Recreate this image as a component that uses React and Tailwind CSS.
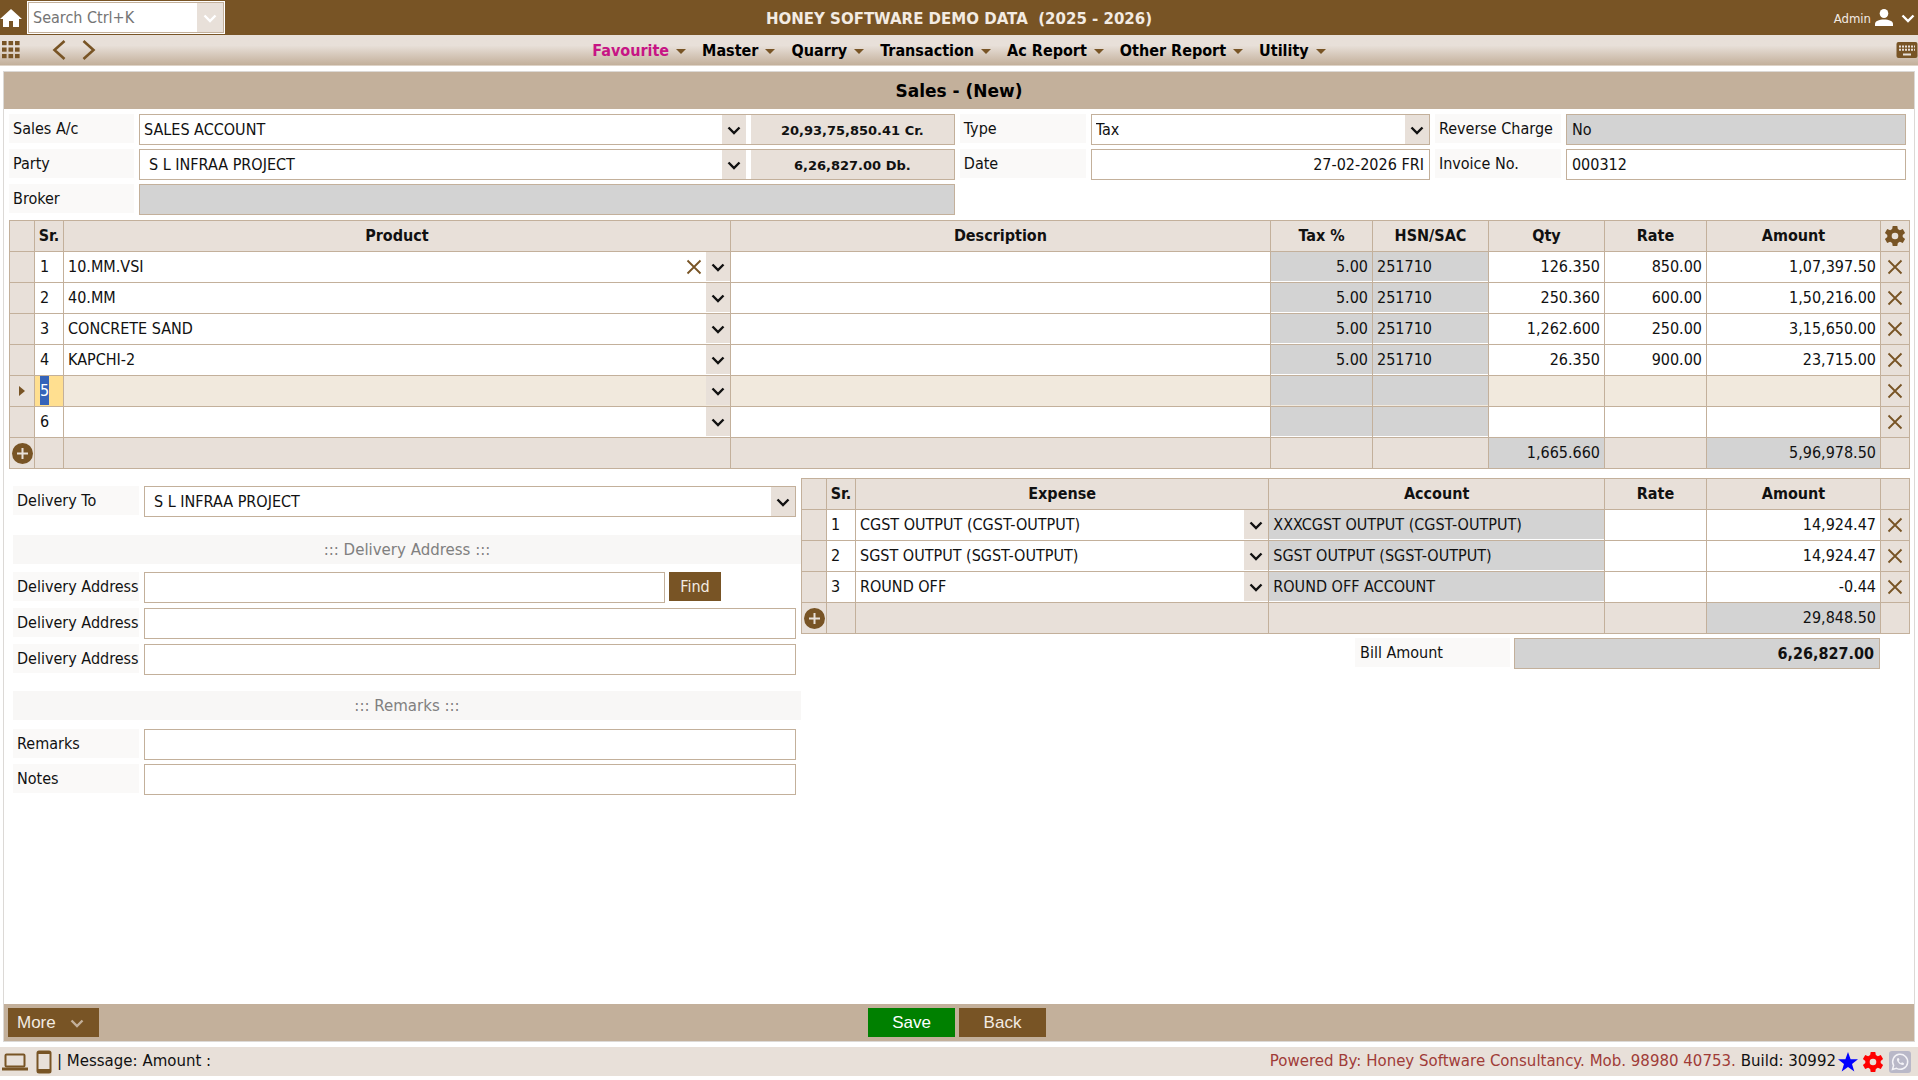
import { useEffect, useRef } from "react";

const menus = ["Favourite", "Master", "Quarry", "Transaction", "Ac Report", "Other Report", "Utility"];

const products = [
  { name: "10.MM.VSI", tax: "5.00", hsn: "251710", qty: "126.350", rate: "850.00", amount: "1,07,397.50" },
  { name: "40.MM", tax: "5.00", hsn: "251710", qty: "250.360", rate: "600.00", amount: "1,50,216.00" },
  { name: "CONCRETE SAND", tax: "5.00", hsn: "251710", qty: "1,262.600", rate: "250.00", amount: "3,15,650.00" },
  { name: "KAPCHI-2", tax: "5.00", hsn: "251710", qty: "26.350", rate: "900.00", amount: "23,715.00" },
  { name: "", tax: "", hsn: "", qty: "", rate: "", amount: "" },
  { name: "", tax: "", hsn: "", qty: "", rate: "", amount: "" },
];

const expenses = [
  { name: "CGST OUTPUT (CGST-OUTPUT)", account: "XXXCGST OUTPUT (CGST-OUTPUT)", amount: "14,924.47" },
  { name: "SGST OUTPUT (SGST-OUTPUT)", account: "SGST OUTPUT (SGST-OUTPUT)", amount: "14,924.47" },
  { name: "ROUND OFF", account: "ROUND OFF ACCOUNT", amount: "-0.44" },
];

const box = "h-[31px] w-full min-w-0 border border-[#c3b09b] px-[5px]";
const headCell = "border border-[#c3b09b] p-0 font-bold";
const cell = "border border-[#c3b09b] p-0";

function Chevron({ className = "h-3 w-3.5" }) {
  return (
    <svg viewBox="0 0 14 12" className={className} fill="none" stroke="currentColor" strokeWidth="2.4">
      <path d="M1.500 3.500 7 9l5.500-5.500" />
    </svg>
  );
}

function Cross() {
  return (
    <svg viewBox="0 0 16 16" className="h-4 w-4" fill="none" stroke="#785425" strokeWidth="1.8">
      <path d="m1.500 1.500 13 13M14.500 1.500l-13 13" />
    </svg>
  );
}

function Gear({ className, hole }) {
  return (
    <svg viewBox="0 0 24 24" className={className} fill="currentColor">
      <path d="M9.500 1h5l.6 3.300 2.200 1.300 3.200-1.200 2.500 4.300-2.600 2.200v2.200l2.600 2.200-2.500 4.300-3.200-1.200-2.200 1.300-.6 3.300h-5l-.6-3.300-2.200-1.300-3.200 1.200L1 15.300l2.600-2.200v-2.200L1 8.700l2.500-4.300 3.200 1.200 2.200-1.300z" />
      <circle cx="12" cy="12" r="3.600" fill={hole} />
    </svg>
  );
}

function PlusButton({ label }) {
  return (
    <button type="button" aria-label={label} className="mx-auto block h-[21px] w-[21px]">
      <svg viewBox="0 0 21 21" className="h-full w-full">
        <circle cx="10.500" cy="10.500" r="10.500" fill="#785425" />
        <path d="M10.500 5v11M5 10.500h11" stroke="#e8e0d9" strokeWidth="2" />
      </svg>
    </button>
  );
}

function Label({ htmlFor, children, className = "px-1" }) {
  return (
    <label htmlFor={htmlFor} className={`flex h-[29px] items-center overflow-hidden bg-[#faf9f8] whitespace-nowrap ${className}`}>
      {children}
    </label>
  );
}

function Combo({ id, label, value, className = "", selectClass = "px-1", children }) {
  return (
    <div className={`relative flex min-w-0 ${className}`}>
      <select id={id} aria-label={label} className={`w-full min-w-0 appearance-none bg-transparent ${selectClass}`}>
        <option>{value}</option>
      </select>
      {children}
      <span className="pointer-events-none absolute inset-y-0 right-0 flex w-6 items-center justify-center bg-[#e8e0d9]">
        <Chevron />
      </span>
    </div>
  );
}

function CellInput({ label, value, gray, right }) {
  return (
    <input
      aria-label={label}
      defaultValue={value}
      readOnly={gray}
      className={`block h-[29px] w-full px-1 ${gray ? "bg-[#d3d3d3]" : "bg-transparent"} ${right ? "text-right" : ""}`}
    />
  );
}

function RemoveCell({ label }) {
  return (
    <td className={`${cell} bg-[#e8e0d9] align-middle`}>
      <button type="button" aria-label={label} className="mx-auto block h-4 w-4"><Cross /></button>
    </td>
  );
}

function TopBar() {
  return (
    <header className="grid h-[35px] shrink-0 grid-cols-[1fr_auto_1fr] items-center bg-[#785425] text-white">
      <div className="flex items-center gap-[5px]">
        <button type="button" aria-label="Home">
          <svg viewBox="0 0 22 18" className="h-[18px] w-[22px]" fill="currentColor">
            <path d="M11 0 0 10h3v8h6v-6h4v6h6v-8h3z" />
          </svg>
        </button>
        <div className="bg-white p-px">
          <div className="flex h-[31px] w-[196px] border border-[#c3b09b] bg-white">
            <input type="search" aria-label="Search" placeholder="Search Ctrl+K" className="min-w-0 flex-1 px-1 placeholder:text-[#757575]" />
            <button type="button" aria-label="Open search list" className="flex w-[26px] items-center justify-center bg-[#e8e0d9] text-white"><Chevron /></button>
          </div>
        </div>
      </div>
      <h1 className="pt-0.5 font-['DejaVu_Sans','Noto_Sans',sans-serif] text-[15px] font-bold whitespace-pre text-[#f3ebe2]">HONEY SOFTWARE DEMO DATA  (2025 - 2026)</h1>
      <div className="flex items-center justify-end gap-1 pr-[3px]">
        <span className="pt-0.5 text-[13px] text-[#f3ebe2]">Admin</span>
        <svg viewBox="0 0 18 17" className="h-[17px] w-[18px]" fill="currentColor">
          <ellipse cx="9" cy="4.500" rx="4.300" ry="4.500" />
          <path d="M0 17v-2c0-3 4-4.500 9-4.500s9 1.500 9 4.500v2z" />
        </svg>
        <button type="button" aria-label="User menu" className="ml-1"><Chevron className="h-3 w-3.5" /></button>
      </div>
    </header>
  );
}

function MenuBar() {
  return (
    <nav className="grid h-[31px] shrink-0 grid-cols-[1fr_auto_1fr] items-center border-b border-[#ded3c7] bg-linear-to-b from-[#e8e0d9] from-35% to-[#c3b09b]">
      <div className="flex items-center pl-[2px] text-[#785425]">
        <button type="button" aria-label="Applications">
          <svg viewBox="0 0 18 18" className="h-[18px] w-[18px]" fill="currentColor">
            {[0, 6.500, 13].map((y) => [0, 6.500, 13].map((x) => <rect key={`${x}-${y}`} x={x} y={y} width="4.600" height="4.200" />))}
          </svg>
        </button>
        <button type="button" aria-label="Previous" className="ml-8">
          <svg viewBox="0 0 14 20" className="h-5 w-3.5" fill="none" stroke="currentColor" strokeWidth="2.6"><path d="m12.500 1-10 9 10 9" /></svg>
        </button>
        <button type="button" aria-label="Next" className="ml-4">
          <svg viewBox="0 0 14 20" className="h-5 w-3.5" fill="none" stroke="currentColor" strokeWidth="2.6"><path d="m1.500 1 10 9-10 9" /></svg>
        </button>
      </div>
      <div className="flex items-center gap-4 pt-0.5 font-bold">
        {menus.map((m) => (
          <button type="button" key={m} className={`flex items-center gap-[7px] ${m === "Favourite" ? "text-[#c71585]" : "text-black"}`}>
            {m}
            <svg viewBox="0 0 10 5" className="h-[5px] w-[10px]" fill="#785425"><path d="M0 0h10L5 5z" /></svg>
          </button>
        ))}
      </div>
      <button type="button" aria-label="Keyboard" className="justify-self-end">
        <svg viewBox="0 0 22 16" className="h-4 w-[22px]">
          <rect x="0.500" y="0" width="21" height="16" rx="2" fill="#785425" />
          <path d="M3 4.500h16M3 7.800h16" stroke="#e8e0d9" strokeWidth="2" strokeDasharray="2 1" />
          <path d="M7 12.500h8" stroke="#e8e0d9" strokeWidth="2" />
        </svg>
      </button>
    </nav>
  );
}

function Balance({ children }) {
  return (
    <output className="ml-[5px] flex w-[203px] items-center justify-center bg-[#e8e0d9] pt-0.5 font-['DejaVu_Sans','Noto_Sans',sans-serif] text-[13px] font-bold">
      {children}
    </output>
  );
}

function SalesHeader() {
  return (
    <div className="grid grid-cols-[125px_818fr_126px_340fr_126px_341fr] gap-x-[5px] gap-y-1 pt-[5px] pr-2 pl-[5px]">
      <Label htmlFor="sales">Sales A/c</Label>
      <div className="flex h-[31px] border border-[#c3b09b]">
        <Combo id="sales" value="SALES ACCOUNT" className="flex-1" />
        <Balance>20,93,75,850.41 Cr.</Balance>
      </div>
      <Label htmlFor="type">Type</Label>
      <Combo id="type" value="Tax" className="h-[31px] border border-[#c3b09b]" />
      <Label htmlFor="reverse">Reverse Charge</Label>
      <input id="reverse" readOnly defaultValue="No" className={`${box} bg-[#d3d3d3]`} />

      <Label htmlFor="party">Party</Label>
      <div className="flex h-[31px] border border-[#c3b09b]">
        <Combo id="party" value="S L INFRAA PROJECT" className="flex-1" selectClass="pl-[9px]" />
        <Balance>6,26,827.00 Db.</Balance>
      </div>
      <Label htmlFor="date">Date</Label>
      <input id="date" defaultValue="27-02-2026 FRI" className={`${box} text-right`} />
      <Label htmlFor="invoice">Invoice No.</Label>
      <input id="invoice" defaultValue="000312" className={box} />

      <Label htmlFor="broker">Broker</Label>
      <input id="broker" readOnly className={`${box} bg-[#d3d3d3]`} />
    </div>
  );
}

function ProductTable() {
  const active = useRef(null);
  useEffect(() => {
    active.current.focus();
    active.current.select();
  }, []);
  return (
    <div className="pt-[5px] pr-1 pl-[5px]">
      <table className="w-full table-fixed border-collapse">
        <colgroup>
          <col className="w-[25px]" /><col className="w-[29px]" /><col className="w-[35.1%]" /><col />
          <col className="w-[102px]" /><col className="w-[116px]" /><col className="w-[116px]" />
          <col className="w-[102px]" /><col className="w-[174px]" /><col className="w-[29px]" />
        </colgroup>
        <thead>
          <tr className="h-[31px] bg-[#e8e0d9]">
            <th className={headCell} />
            {["Sr.", "Product", "Description", "Tax %", "HSN/SAC", "Qty", "Rate", "Amount"].map((h) => (
              <th key={h} scope="col" className={headCell}>{h}</th>
            ))}
            <th className={headCell}>
              <button type="button" aria-label="Column settings" className="mx-auto block h-[22px] w-[22px] text-[#785425]">
                <Gear className="h-full w-full" hole="#e8e0d9" />
              </button>
            </th>
          </tr>
        </thead>
        <tbody>
          {products.map((p, i) => {
            const on = i === 4;
            return (
              <tr key={i} className={`h-[31px] align-top ${on ? "bg-[#f1e9dd]" : "bg-white"}`}>
                <td className={`${cell} bg-[#e8e0d9] align-middle`}>
                  {on && <svg viewBox="0 0 6 10" className="mx-auto h-2.5 w-1.5" fill="#785425"><path d="M0 0v10l6-5z" /></svg>}
                </td>
                <td className={`${cell} ${on ? "bg-[#ffdf90]" : ""}`}>
                  <input
                    ref={on ? active : null}
                    aria-label="Serial number"
                    defaultValue={i + 1}
                    className="block h-[29px] w-full px-[5px] leading-[29px] outline-none selection:bg-[#3563b9] selection:text-white"
                  />
                </td>
                <td className={cell}>
                  <Combo label="Product" value={p.name} className="h-[29px]">
                    {i === 0 && (
                      <button type="button" aria-label="Clear product" className="absolute inset-y-0 right-7 flex items-center"><Cross /></button>
                    )}
                  </Combo>
                </td>
                <td className={cell}><CellInput label="Description" value="" /></td>
                <td className={cell}><CellInput label="Tax" value={p.tax} gray right /></td>
                <td className={cell}><CellInput label="HSN/SAC" value={p.hsn} gray /></td>
                <td className={cell}><CellInput label="Quantity" value={p.qty} right /></td>
                <td className={cell}><CellInput label="Rate" value={p.rate} right /></td>
                <td className={cell}><CellInput label="Amount" value={p.amount} right /></td>
                <RemoveCell label="Remove row" />
              </tr>
            );
          })}
        </tbody>
        <tfoot>
          <tr className="h-[31px] bg-[#e8e0d9]">
            <td className={cell}><PlusButton label="Add product row" /></td>
            <td className={cell} /><td className={cell} /><td className={cell} /><td className={cell} /><td className={cell} />
            <td className={`${cell} bg-[#d3d3d3] pr-1 text-right`}>1,665.660</td>
            <td className={cell} />
            <td className={`${cell} bg-[#d3d3d3] pr-1 text-right`}>5,96,978.50</td>
            <td className={cell} />
          </tr>
        </tfoot>
      </table>
    </div>
  );
}

function SectionTitle({ children }) {
  return (
    <h2 className="flex h-[29px] items-center justify-center bg-[#f8f7f6] font-['DejaVu_Sans','Noto_Sans',sans-serif] text-[15px] text-[#808080]">
      {children}
    </h2>
  );
}

function TextRow({ id, label }) {
  return (
    <div className="flex gap-[5px] pr-[5px]">
      <Label htmlFor={id} className="w-[126px] shrink-0 pl-1">{label}</Label>
      <input id={id} className={box} />
    </div>
  );
}

function Delivery() {
  return (
    <section className="flex flex-col pt-[17px]">
      <div className="flex gap-[5px] pr-[5px]">
        <Label htmlFor="delivery" className="w-[126px] shrink-0 pl-1">Delivery To</Label>
        <Combo id="delivery" value="S L INFRAA PROJECT" className="h-[31px] flex-1 border border-[#c3b09b]" selectClass="pl-[9px]" />
      </div>
      <div className="mt-[18px]"><SectionTitle>::: Delivery Address :::</SectionTitle></div>
      <div className="mt-2 flex flex-col gap-[5px]">
        <div className="flex gap-1">
          <Label htmlFor="address1" className="mr-px w-[126px] shrink-0 pl-1">Delivery Address</Label>
          <input id="address1" className="h-[31px] min-w-0 flex-1 border border-[#c3b09b] px-[5px]" />
          <button type="button" className="mr-20 h-[29px] w-[52px] bg-[#785425] text-[#f3ebe2]">Find</button>
        </div>
        <TextRow id="address2" label="Delivery Address" />
        <TextRow id="address3" label="Delivery Address" />
      </div>
      <div className="mt-4"><SectionTitle>::: Remarks :::</SectionTitle></div>
      <div className="mt-[9px] flex flex-col gap-1">
        <TextRow id="remarks" label="Remarks" />
        <TextRow id="notes" label="Notes" />
      </div>
    </section>
  );
}

function Expenses() {
  return (
    <section className="pt-[9px]">
      <table className="w-full table-fixed border-collapse">
        <colgroup>
          <col className="w-[25px]" /><col className="w-[29px]" /><col /><col className="w-[30.3%]" />
          <col className="w-[102px]" /><col className="w-[174px]" /><col className="w-[29px]" />
        </colgroup>
        <thead>
          <tr className="h-[31px] bg-[#e8e0d9]">
            <th className={headCell} />
            {["Sr.", "Expense", "Account", "Rate", "Amount"].map((h) => (
              <th key={h} scope="col" className={headCell}>{h}</th>
            ))}
            <th className={headCell} />
          </tr>
        </thead>
        <tbody>
          {expenses.map((e, i) => (
            <tr key={e.name} className="h-[31px]">
              <td className={`${cell} bg-[#e8e0d9]`} />
              <td className={`${cell} pl-1`}>{i + 1}</td>
              <td className={`${cell} align-top`}><Combo label="Expense" value={e.name} className="h-[29px]" /></td>
              <td className={`${cell} align-top`}><CellInput label="Account" value={e.account} gray /></td>
              <td className={`${cell} align-top`}><CellInput label="Rate" value="" right /></td>
              <td className={`${cell} align-top`}><CellInput label="Amount" value={e.amount} right /></td>
              <RemoveCell label="Remove expense" />
            </tr>
          ))}
        </tbody>
        <tfoot>
          <tr className="h-[31px] bg-[#e8e0d9]">
            <td className={cell}><PlusButton label="Add expense row" /></td>
            <td className={cell} /><td className={cell} /><td className={cell} /><td className={cell} />
            <td className={`${cell} bg-[#d3d3d3] pr-1 text-right`}>29,848.50</td>
            <td className={cell} />
          </tr>
        </tfoot>
      </table>
      <div className="mt-1 mr-[30px] flex justify-end gap-1">
        <Label htmlFor="bill" className="w-[155px] px-[5px]">Bill Amount</Label>
        <input id="bill" readOnly defaultValue="6,26,827.00" className="h-[31px] w-[366px] border border-[#c3b09b] bg-[#d3d3d3] px-[5px] text-right font-bold" />
      </div>
    </section>
  );
}

function StatusBar() {
  return (
    <footer className="mb-1 flex h-[29px] shrink-0 items-center justify-between bg-[#e8e0d9] font-['DejaVu_Sans','Noto_Sans',sans-serif] text-[15px]">
      <div className="flex items-center">
        <svg viewBox="0 0 26 18" className="ml-[2px] h-[18px] w-[26px]" fill="none" stroke="#785425">
          <rect x="3.500" y="1.500" width="19" height="12" rx="1" strokeWidth="2" />
          <path d="M0 16h26" strokeWidth="3" />
        </svg>
        <svg viewBox="0 0 16 24" className="ml-2 h-6 w-4">
          <rect x="0.500" y="0.500" width="15" height="23" rx="2.500" fill="#785425" />
          <rect x="2.500" y="4" width="11" height="15" fill="#e8e0d9" />
        </svg>
        <span className="pb-0.5 pl-[5px] whitespace-pre">| Message: Amount :</span>
      </div>
      <div className="flex items-center pr-[7px]">
        <span className="pb-0.5 text-[#a03c38]">Powered By: Honey Software Consultancy. Mob. 98980 40753.</span>
        <span className="pb-0.5 pl-[5px]">Build: 30992</span>
        <svg viewBox="0 0 20 20" className="ml-[2px] h-5 w-5" fill="#00f">
          <path d="m10 0 2.600 7.200H20l-6 4.700 2.300 7.600L10 15l-6.300 4.500L6 11.900 0 7.200h7.400z" />
        </svg>
        <button type="button" aria-label="Settings" className="ml-1 h-[22px] w-[22px] text-[#f00]">
          <Gear className="h-full w-full" hole="#e8e0d9" />
        </button>
        <button type="button" aria-label="WhatsApp" className="ml-[5px] h-[22px] w-[22px]">
          <svg viewBox="0 0 22 22" className="h-full w-full" fill="none" stroke="#f4f3f7" strokeWidth="1.500">
            <rect width="22" height="22" rx="3" fill="#b9b8c8" stroke="none" />
            <path d="m3.500 18.500 1.100-4.100a7.500 7.500 0 1 1 2.900 2.900z" />
            <path d="M8 7.500c-.8 3 3.500 7.200 6.600 6.400l.4-1.700-2-.9-1 .9c-1.100-.5-1.900-1.300-2.300-2.300l.8-1-.8-1.900z" fill="#f4f3f7" stroke="none" />
          </svg>
        </button>
      </div>
    </footer>
  );
}

export default function App() {
  return (
    <div className="flex min-h-screen flex-col bg-white font-['DejaVu_Sans_Condensed','Noto_Sans',sans-serif] text-base leading-6 text-[#111]">
      <TopBar />
      <MenuBar />
      <main className="mx-[3px] mt-[5px] mb-[5px] flex flex-1 flex-col border border-[#dcd9d6]">
        <h2 className="flex h-[37px] items-center justify-center bg-[#c3b09b] font-['DejaVu_Sans','Noto_Sans',sans-serif] text-[17px] font-bold text-black">Sales - (New)</h2>
        <SalesHeader />
        <ProductTable />
        <div className="grid flex-1 grid-cols-[788fr_1109fr] pr-1 pl-[9px]">
          <Delivery />
          <Expenses />
        </div>
        <div className="grid h-[37px] grid-cols-[1fr_auto_1fr] items-center bg-[#c3b09b] pr-2 pl-1 font-['Liberation_Sans',sans-serif] text-[17px] text-[#f3ebe2]">
          <button type="button" className="flex h-[29px] w-[91px] items-center gap-3.5 bg-[#785425] pl-[9px]">
            More
            <span className="text-[#c3b09b]"><Chevron /></span>
          </button>
          <div className="flex gap-1">
            <button type="button" className="h-[29px] w-[87px] bg-[#008000] text-white">Save</button>
            <button type="button" className="h-[29px] w-[87px] bg-[#785425]">Back</button>
          </div>
        </div>
      </main>
      <StatusBar />
    </div>
  );
}
